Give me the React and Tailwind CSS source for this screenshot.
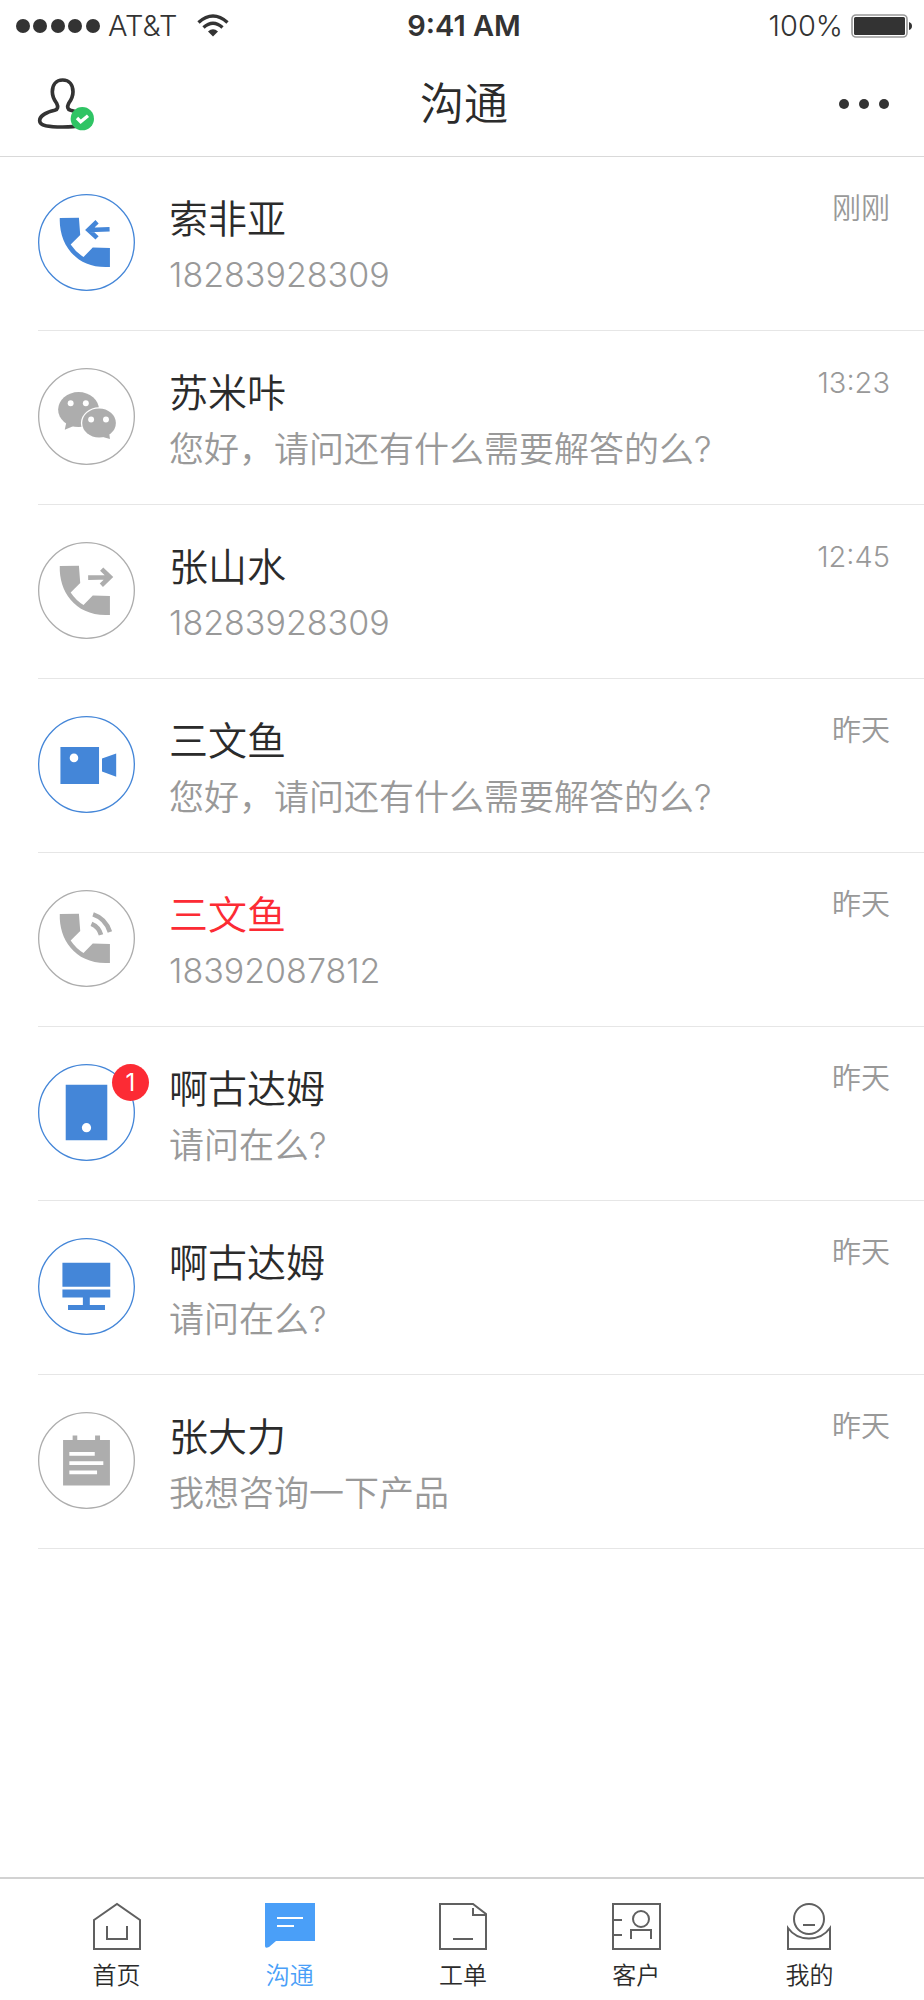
import React, { useState } from "react";

const PHONE = "M66 73 L124 72 L128 124 L99 153 Q115 177 138 191 L166 162 L218 164 V221 C115 228 63 152 66 73 Z";

const icons = {
  callIn: (
    <>
      <path d={PHONE} fill="currentColor" />
      <path d="M217 107 L154 109 M179 84 L153 109 L179 133" fill="none" stroke="currentColor" strokeWidth="14" />
    </>
  ),
  callOut: (
    <>
      <path d={PHONE} fill="currentColor" />
      <path d="M152 108 L218 107 M193 82 L218 106 L192 131" fill="none" stroke="currentColor" strokeWidth="14" />
    </>
  ),
  calling: (
    <>
      <path d={PHONE} fill="currentColor" />
      <path d="M167 74 Q204 86 218 127 M162 103 Q184 112 191 136" fill="none" stroke="currentColor" strokeWidth="14" />
    </>
  ),
  wechat: (
    <>
      <ellipse cx="123" cy="126" rx="62" ry="53" fill="currentColor" />
      <path d="M87 160 L81 187 L112 174 Z" fill="currentColor" />
      <ellipse cx="185" cy="167" rx="55" ry="48" fill="white" />
      <ellipse cx="185" cy="167" rx="51" ry="44" fill="currentColor" />
      <path d="M194 208 L218 215 L215 190 Z" fill="currentColor" />
      <g fill="white">
        <circle cx="99" cy="107" r="9" />
        <circle cx="145" cy="107" r="9" />
        <circle cx="161" cy="156" r="9" />
        <circle cx="206" cy="156" r="9" />
      </g>
    </>
  ),
  video: (
    <>
      <path d="M68 94 H185 V206 H68 Z M194 129 L237 114 V184 L194 168 Z" fill="currentColor" />
      <circle cx="109" cy="127" r="13" fill="white" />
    </>
  ),
  mobile: (
    <>
      <path d="M84 63 H210 V231 H84 Z" fill="currentColor" />
      <circle cx="147" cy="193" r="14" fill="white" />
    </>
  ),
  desktop: (
    <path d="M74 75 H219 V148 H74 Z M74 156 H219 V180 H157 V203 H203 V218 H91 V203 H136 V180 H74 Z" fill="currentColor" />
  ),
  note: (
    <>
      <path d="M76 85 H105 V71 H119 V85 H173 V71 H188 V85 H218 V223 H76 Z" fill="currentColor" />
      <path d="M95 127 H172 M95 155 H198 M95 183 H179" stroke="white" strokeWidth="11" />
    </>
  ),
};

const conversations = [
  { id: 1, name: "索非亚", phone: "18283928309", time: "刚刚", icon: "callIn", active: true },
  { id: 2, name: "苏米咔", text: "您好，请问还有什么需要解答的么?", time: "13:23", icon: "wechat" },
  { id: 3, name: "张山水", phone: "18283928309", time: "12:45", icon: "callOut" },
  { id: 4, name: "三文鱼", text: "您好，请问还有什么需要解答的么?", time: "昨天", icon: "video", active: true },
  { id: 5, name: "三文鱼", phone: "18392087812", time: "昨天", icon: "calling", missed: true },
  { id: 6, name: "啊古达姆", text: "请问在么?", time: "昨天", icon: "mobile", active: true, unread: 1 },
  { id: 7, name: "啊古达姆", text: "请问在么?", time: "昨天", icon: "desktop", active: true },
  { id: 8, name: "张大力", text: "我想咨询一下产品", time: "昨天", icon: "note" },
];

const tabs = [
  {
    id: "home",
    label: "首页",
    icon: <path d="M3 19 L26 3 L49 19 V48 H3 Z M16 25 V38 H36 V25" />,
  },
  {
    id: "chat",
    label: "沟通",
    icon: (
      <>
        <path d="M1 2 H51 V40 H12 L5 46 Q1 48 1 45 Z" fill="currentColor" stroke="none" />
        <path d="M13 17 H39 M13 25 H30" stroke="white" />
      </>
    ),
  },
  {
    id: "order",
    label: "工单",
    icon: <path d="M3 3 H36 L49 13 V48 H3 Z M36 7 V14 H49 M16 38 H36" />,
  },
  {
    id: "customer",
    label: "客户",
    icon: (
      <>
        <path d="M3 3 H50 V48 H3 Z M3 19 H12 M3 34 H12 M21 38 V29 H41 V38" />
        <circle cx="31" cy="18" r="8" />
      </>
    ),
  },
  {
    id: "mine",
    label: "我的",
    icon: (
      <>
        <circle cx="26" cy="18" r="15" />
        <path d="M20 24 H32 M5 27 V48 H47 V27 C37 41 15 41 5 27 Z" />
      </>
    ),
  },
];

const StatusBar = () => (
  <div className="grid grid-cols-3 items-center h-[52px] pl-4 pr-3 text-[29px] leading-[52px] text-[#333333]">
    <div className="flex items-center gap-2 font-[350]">
      <svg width="84" height="14" viewBox="0 0 84 14" fill="currentColor" aria-hidden="true">
        <circle cx="7" cy="7" r="7" />
        <circle cx="24" cy="7" r="7" />
        <circle cx="42" cy="7" r="7" />
        <circle cx="59" cy="7" r="7" />
        <circle cx="77" cy="7" r="7" />
      </svg>
      <span>AT&amp;T</span>
      <svg className="ml-3" width="32" height="24" viewBox="0 0 32 24" fill="none" stroke="currentColor" strokeWidth="3.4" aria-hidden="true">
        <path d="M1.5 8.5 Q16 -4.5 30.5 8.5" />
        <path d="M6.5 13.5 Q16 5 25.5 13.5" />
        <path d="M11 17.5 Q16 13 21 17.5 L16 22.5 Z" fill="currentColor" stroke="none" />
      </svg>
    </div>
    <div className="text-center font-semibold">9:41 AM</div>
    <div className="flex items-center justify-end gap-2 font-[350]">
      <span>100%</span>
      <svg width="61" height="24" viewBox="0 0 61 24" aria-hidden="true">
        <rect x="1" y="1" width="55" height="22" rx="4" fill="none" stroke="#999999" strokeWidth="1.6" />
        <rect x="3" y="3" width="51" height="18" rx="1.5" fill="#333333" />
        <path d="M58 8 Q61 9 61 12 Q61 15 58 16 Z" fill="#333333" />
      </svg>
    </div>
  </div>
);

const Header = () => (
  <header className="border-b border-[#d9d9d9]">
    <StatusBar />
    <div className="flex items-center justify-between h-[104px] pl-9 pr-8">
      <button type="button" aria-label="在线状态" className="w-24">
        <svg width="59" height="55" viewBox="108 230 177 165" aria-hidden="true">
          <path
            d="M188 239 C168 239 157 254 157 274 C157 291 163 299 170 309 C175 319 174 327 164 330 C142 335 119 346 119 361 C119 377 145 380 188 380 C232 380 254 377 254 360 C254 345 235 335 212 330 C202 327 201 319 206 309 C213 299 219 291 219 274 C219 254 208 239 188 239 Z"
            fill="none"
            stroke="#333333"
            strokeWidth="11"
          />
          <circle cx="247" cy="355" r="35" fill="#2fc464" />
          <path d="M231 353 L242 364 L264 346" fill="none" stroke="white" strokeWidth="10" />
        </svg>
      </button>
      <h1 className="text-[44px] leading-[60px] font-[350] text-[#2b2b2b]">沟通</h1>
      <button type="button" aria-label="更多" className="flex justify-end w-24">
        <svg width="60" height="20" viewBox="0 0 60 20" fill="#333333" aria-hidden="true">
          <circle cx="12" cy="10" r="5" />
          <circle cx="32" cy="10" r="5" />
          <circle cx="52" cy="10" r="5" />
        </svg>
      </button>
    </div>
  </header>
);

const Conversation = ({ item }) => (
  <li className="ml-[38px] border-b border-[#e6e6e6]">
    <a href={`#chat-${item.id}`} className="flex items-start h-[173px] pt-[34px] pr-[34px]">
      <div className={`relative shrink-0 mt-[3px] w-[97px] ${item.active ? "text-[#4486d8]" : "text-[#adadad]"}`}>
        <svg className="w-full" viewBox="0 0 294 294" aria-hidden="true">
          <circle cx="147" cy="147" r="145" fill="none" stroke="currentColor" strokeWidth="4" />
          {icons[item.icon]}
        </svg>
        {item.unread && (
          <span className="absolute top-0 -right-[14px] size-[37px] rounded-full bg-[#fc2b34] text-center text-2xl leading-[37px] text-white">
            {item.unread}
          </span>
        )}
      </div>
      <div className="flex-1 min-w-0 pl-[34px]">
        <h2 className={`text-[39px] leading-[56px] font-[350] truncate ${item.missed ? "text-[#fc2b34]" : "text-[#2b2b2b]"}`}>
          {item.name}
        </h2>
        {item.phone ? (
          <p className="text-[34px] leading-[56px] font-light text-[#999999] truncate">{item.phone}</p>
        ) : (
          <p className="text-[35px] leading-[56px] font-[350] text-[#999999] truncate">{item.text}</p>
        )}
      </div>
      <time className="shrink-0 text-[29px] leading-9 font-[350] text-[#999999]">{item.time}</time>
    </a>
  </li>
);

const App = () => {
  const [tab, setTab] = useState("chat");

  return (
    <div className="flex flex-col min-h-screen bg-white font-['Inter','Noto_Sans_CJK_SC',sans-serif]">
      <Header />
      <main className="flex-1">
        <ul>
          {conversations.map((item) => (
            <Conversation key={item.id} item={item} />
          ))}
        </ul>
      </main>
      <nav className="flex h-[123px] pl-[30px] pr-7 pt-[22px] border-t-2 border-[#d2d2d2]">
        {tabs.map((t) => (
          <button
            key={t.id}
            type="button"
            onClick={() => setTab(t.id)}
            className={`flex flex-1 flex-col items-center gap-2 ${tab === t.id ? "text-[#4a9ff8]" : "text-[#2b2b2b]"}`}
          >
            <svg
              width="52"
              height="51"
              viewBox="0 0 52 51"
              fill="none"
              stroke={tab === t.id ? "currentColor" : "#606060"}
              strokeWidth="2"
              aria-hidden="true"
            >
              {t.icon}
            </svg>
            <span className="text-2xl leading-8 font-[350]">{t.label}</span>
          </button>
        ))}
      </nav>
    </div>
  );
};

export default App;
